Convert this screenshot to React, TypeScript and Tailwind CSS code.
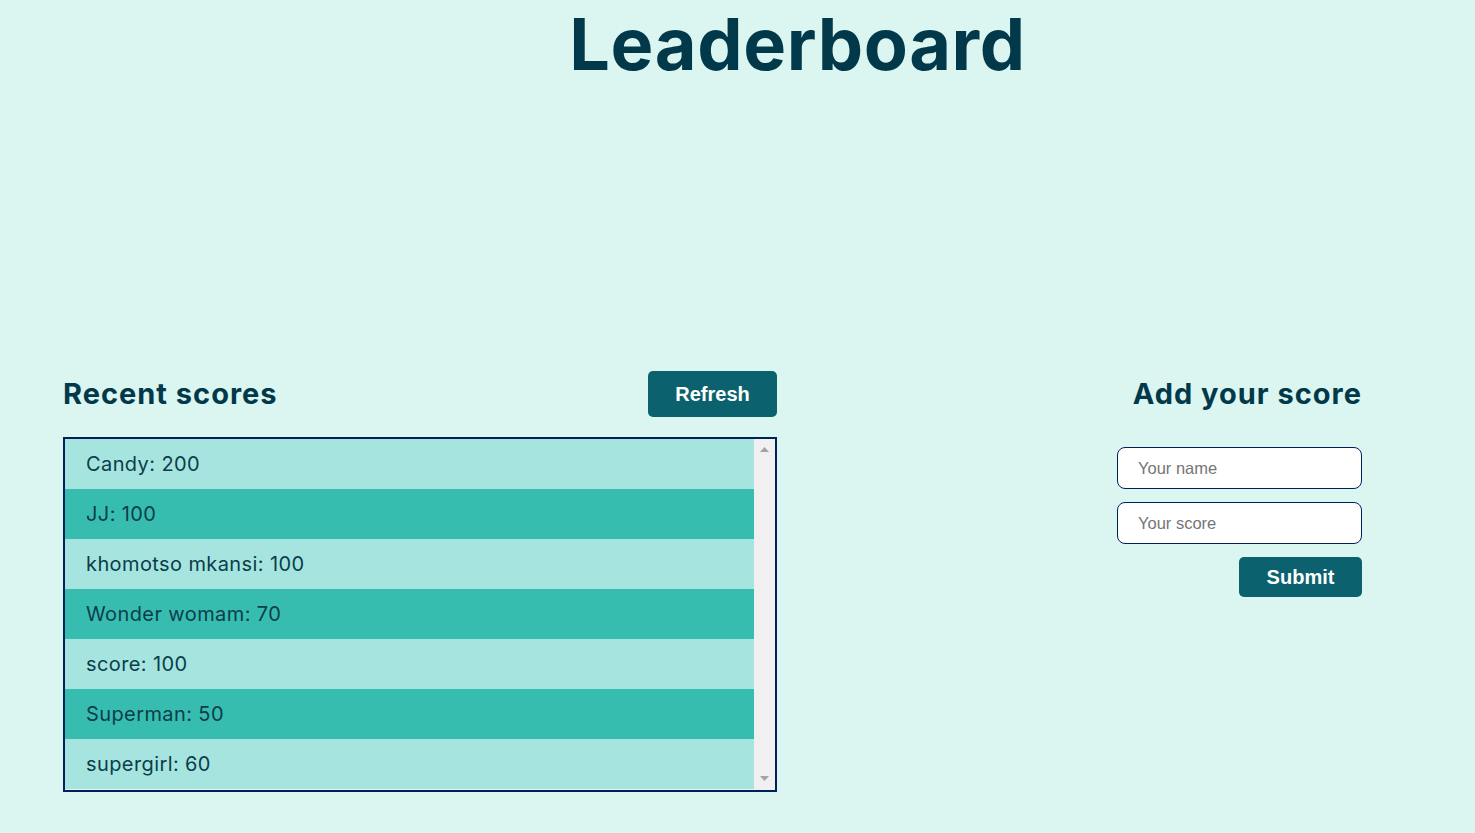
import React from "react";

const scores = [
  "Candy: 200",
  "JJ: 100",
  "khomotso mkansi: 100",
  "Wonder womam: 70",
  "score: 100",
  "Superman: 50",
  "supergirl: 60",
];

export default function App() {
  return (
    <div className="min-h-[833px] w-full bg-[#dbf5f0] font-['Inter','Noto_Sans',sans-serif] text-[#02394a]">
      <h1 className="pl-[120px] text-center text-[72px] font-bold leading-[88px] tracking-[0.6px] text-[#02394a]">
        Leaderboard
      </h1>
      <div className="mt-[283px] flex justify-between pl-[63px] pr-[113px]">
        <section className="w-[714px]">
          <div className="flex items-center justify-between">
            <h2 className="text-[29px] font-bold leading-[46px] tracking-[1px]">Recent scores</h2>
            <button className="h-[46px] w-[129px] rounded-[5px] bg-[#0b626e] font-['Liberation_Sans',Arial,sans-serif] text-[20px] font-bold text-white">
              Refresh
            </button>
          </div>
          <div className="mt-[20px] flex h-[355px] border-2 border-[#00205b] bg-[#f0f0f0]">
            <ul className="flex-1">
              {scores.map((s, i) => (
                <li
                  key={s}
                  className={`flex h-[50px] items-center pl-[21px] text-[20px] font-normal tracking-[0.4px] text-[#0b3d4a] ${
                    i % 2 === 0 ? "bg-[#a6e4df]" : "bg-[#37bdb0]"
                  }`}
                >
                  {s}
                </li>
              ))}
            </ul>
            <div className="relative w-[21px] bg-[#f0f0f0]">
              <svg className="absolute left-[6px] top-[8px]" width="9" height="6" viewBox="0 0 9 6">
                <path d="M0 5 L4.5 0 L9 5 Z" fill="#a3a3a3" />
              </svg>
              <svg className="absolute bottom-[8px] left-[6px]" width="9" height="6" viewBox="0 0 9 6">
                <path d="M0 0 L9 0 L4.5 5 Z" fill="#a3a3a3" />
              </svg>
            </div>
          </div>
        </section>
        <section className="flex w-[245px] flex-col items-end">
          <h2 className="whitespace-nowrap text-[29px] font-bold leading-[46px] tracking-[1px]">Add your score</h2>
          <form className="mt-[30px] flex w-[245px] flex-col items-end gap-[13px]" onSubmit={(e) => e.preventDefault()}>
            <input
              placeholder="Your name"
              className="h-[42px] w-full rounded-[8px] border border-[#00205b] bg-white pl-[20px] font-['Liberation_Sans',Arial,sans-serif] text-[16.5px] text-black placeholder:text-[#757575] outline-none"
            />
            <input
              placeholder="Your score"
              className="h-[42px] w-full rounded-[8px] border border-[#00205b] bg-white pl-[20px] font-['Liberation_Sans',Arial,sans-serif] text-[16.5px] text-black placeholder:text-[#757575] outline-none"
            />
            <button className="h-[40px] w-[123px] rounded-[5px] bg-[#0b626e] font-['Liberation_Sans',Arial,sans-serif] text-[20px] font-bold text-white">
              Submit
            </button>
          </form>
        </section>
      </div>
    </div>
  );
}
